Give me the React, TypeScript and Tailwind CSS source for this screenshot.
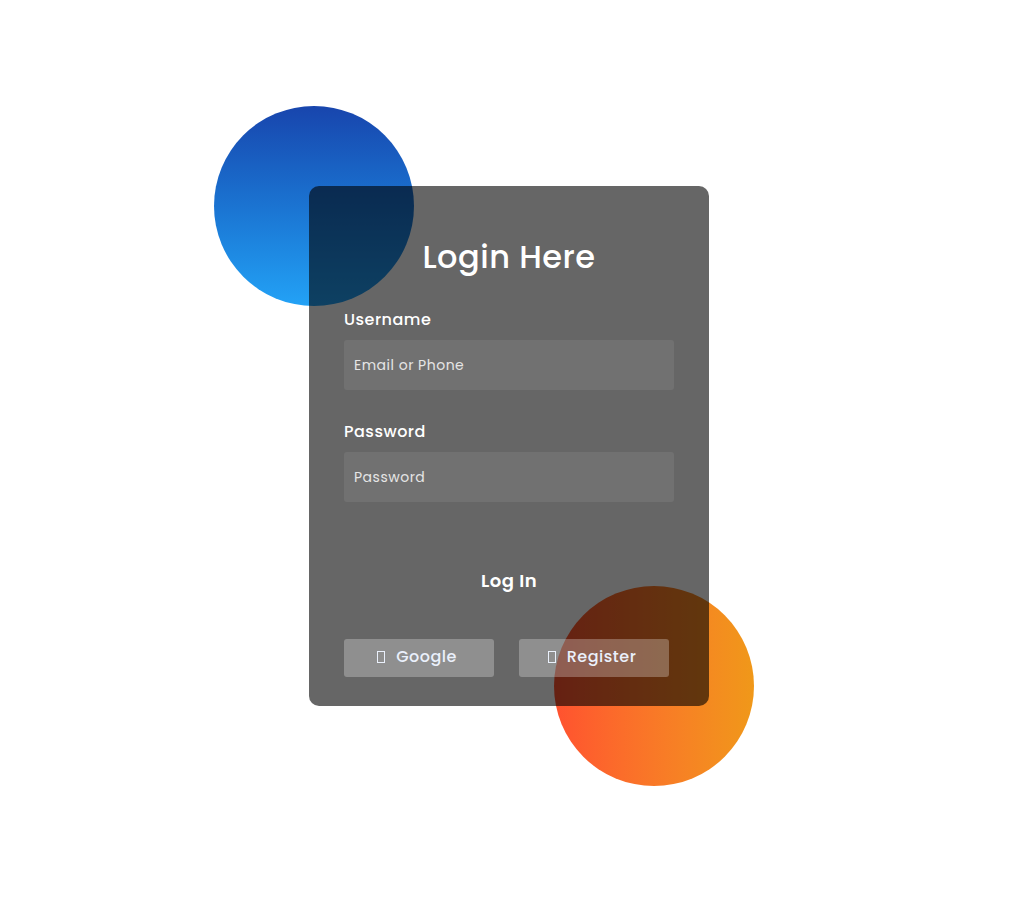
import React from "react";

const font = { fontFamily: "Poppins, Inter, 'Noto Sans', sans-serif" };

function Tofu() {
  // placeholder box where the icon font failed to load
  return <span className="inline-block w-[8px] h-[12px] border border-[#eaf0fb]" />;
}

export default function App() {
  return (
    <div className="min-h-[908px] w-full bg-white tracking-[0.5px]" style={font}>
      <div className="relative pl-[309px] pt-[186px]">
        <div className="absolute left-[214px] top-[106px] h-[200px] w-[200px] rounded-full bg-gradient-to-b from-[#1845ad] to-[#23a2f6]" />
        <div className="absolute left-[554px] top-[586px] h-[200px] w-[200px] rounded-full bg-gradient-to-r from-[#ff512f] to-[#f09819]" />

        <form className="relative flex h-[520px] w-[400px] flex-col rounded-[10px] bg-black/60 px-[35px] pt-[50px]">
          <h3 className="text-center text-[32px] font-medium leading-[42px] text-white">Login Here</h3>

          <label className="mt-[30px] text-[16px] font-medium leading-[24px] text-white">Username</label>
          <input
            className="mt-[8px] h-[50px] w-full rounded-[3px] bg-white/[0.07] px-[10px] text-[14px] tracking-[0.5px] text-white outline-none placeholder:text-[#e5e5e5]"
            placeholder="Email or Phone"
          />

          <label className="mt-[30px] text-[16px] font-medium leading-[24px] text-white">Password</label>
          <input
            type="password"
            className="mt-[8px] h-[50px] w-full rounded-[3px] bg-white/[0.07] px-[10px] text-[14px] tracking-[0.5px] text-white outline-none placeholder:text-[#e5e5e5]"
            placeholder="Password"
          />

          <button type="button" className="mt-[49px] h-[58px] w-full rounded-[5px] text-[18px] font-semibold tracking-[0.5px] text-white">
            Log In
          </button>

          <div className="mt-[30px] flex gap-[25px]">
            <div className="flex h-[38px] w-[150px] items-center justify-center gap-[11px] rounded-[3px] bg-white/[0.27] pr-[4px] pb-[2px] text-[16px] font-medium text-[#eaf0fb]">
              <Tofu />
              <span>Google</span>
            </div>
            <div className="flex h-[38px] w-[150px] items-center justify-center gap-[11px] rounded-[3px] bg-white/[0.27] pr-[4px] pb-[2px] text-[16px] font-medium text-[#eaf0fb]">
              <Tofu />
              <span>Register</span>
            </div>
          </div>
        </form>
      </div>
    </div>
  );
}
